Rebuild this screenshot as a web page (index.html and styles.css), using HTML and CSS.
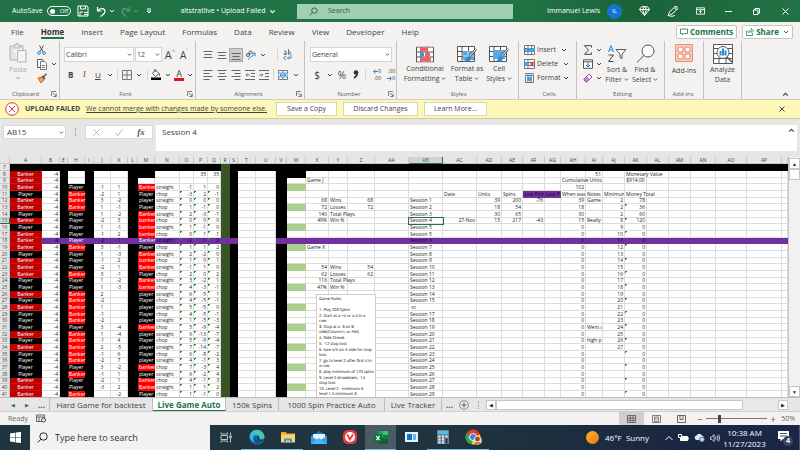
FILE: index.html
```html
<!DOCTYPE html>
<html lang="en">
<head>
<meta charset="utf-8">
<title>altstratlive - Excel</title>
<link rel="stylesheet" href="styles.css">
</head>
<body>
<svg class="defs" aria-hidden="true">
  <symbol id="chev" viewBox="0 0 6 6"><path d="M1 2l2 2 2-2" fill="none" stroke="currentColor"/></symbol>
  <symbol id="launch" viewBox="0 0 6 6"><path d="M.5 5V.5H5M2 2l3 3M5.3 2.500v3h-3" fill="none" stroke="currentColor" stroke-width=".8"/></symbol>
  <symbol id="table" viewBox="0 0 18 16"><path d="M.5.500h17v15H.5z" fill="#fff"/><path d="M.5.500h17v15H.5zM.5 5.500h17M.5 10.500h17M5 .5v15M11.500.500v15" fill="none" stroke="#555"/></symbol>
</svg>

<header class="titlebar">
  <span class="autosave">AutoSave</span>
  <button class="toggle" aria-label="AutoSave off"><i></i>Off</button>
  <button class="qa save" aria-label="Save"><svg viewBox="0 0 12 12" width="12" height="12"><path d="M1 1h9l1 1v9H1zM3.500 1v3h5V1M3 11V7h3M7 7.500h4M7 9.500h4" fill="none" stroke="currentColor"/></svg></button>
  <button class="qa undo" aria-label="Undo"><svg viewBox="0 0 11 11" width="11" height="11"><path d="M1.500 1v4h4M1.500 5C4 1.500 9 2 9 5.500c0 2-2 3-4.500 5" fill="none" stroke="currentColor" stroke-width="1.200"/></svg><svg width="6" height="6"><use href="#chev"/></svg></button>
  <button class="qa redo" aria-label="Redo"><svg viewBox="0 0 11 11" width="11" height="11"><path d="M9.500 1v4h-4M9.500 5C7 1.500 2 2 2 5.500c0 2 2 3 4.500 5" fill="none" stroke="currentColor" stroke-width="1.200"/></svg><svg width="6" height="6"><use href="#chev"/></svg></button>
  <button class="qa more" aria-label="Customize"><svg viewBox="0 0 6 6" width="6" height="6"><path d="M1 1h4M1 3l2 2 2-2z" fill="none" stroke="currentColor"/></svg></button>
  <button class="doc">altstratlive • Upload Failed <svg width="7" height="7"><use href="#chev"/></svg></button>
  <label class="search"><svg viewBox="0 0 10 10" width="9" height="9"><circle cx="6" cy="4" r="3" fill="none" stroke="currentColor"/><path d="M4 6L.5 9.500" stroke="currentColor"/></svg><input type="text" placeholder="Search" aria-label="Search"></label>
  <span class="user">Immanuel Lewis</span><span class="avatar">IL</span>
  <nav class="winbtns">
    <button aria-label="Premium"><svg viewBox="0 0 11 10" width="11" height="10"><path d="M2.500.700h6l2 2.800-5 6-5-6zM.5 3.500h10M3.500 3.500l2 6 2-6-2-2.800z" fill="none" stroke="currentColor"/></svg></button>
    <button aria-label="Pen"><svg viewBox="0 0 11 11" width="11" height="11"><path d="M1 10l1.500-4L7 1.500 9.500 4 5 8zM7 1l3-.5L10 4M3 10.500c2-1 4 .5 5-1.500" fill="none" stroke="currentColor"/></svg></button>
    <button aria-label="Ribbon display"><svg viewBox="0 0 10 8" width="9" height="8"><path d="M.5.500h9v7h-9zM.5 2.500h9M5 6.500v-3M3.500 5L5 3.500 6.500 5" fill="none" stroke="currentColor"/></svg></button>
    <button aria-label="Minimize"><svg viewBox="0 0 7 7" width="7" height="7"><path d="M0 3.500h7" stroke="currentColor"/></svg></button>
    <button aria-label="Restore"><svg viewBox="0 0 7 7" width="7" height="7"><path d="M.5 2h4.500v4.500H.5zM2 2V.5h4.500V5H5" fill="none" stroke="currentColor"/></svg></button>
    <button aria-label="Close"><svg viewBox="0 0 7 7" width="7" height="7"><path d="M.5.500l6 6M6.500.500l-6 6" stroke="currentColor"/></svg></button>
  </nav>
</header>

<nav class="tabs">
  <a href="#">File</a><a href="#" class="on">Home</a><a href="#">Insert</a><a href="#">Page Layout</a><a href="#">Formulas</a><a href="#">Data</a><a href="#">Review</a><a href="#">View</a><a href="#">Developer</a><a href="#">Help</a>
  <span class="grow"></span>
  <button class="pill"><svg viewBox="0 0 8 8" width="8" height="8"><path d="M.5 1h7v4.500H4L2.500 7V5.500h-2z" fill="none" stroke="currentColor" stroke-width=".8"/></svg>Comments</button>
  <button class="pill"><svg viewBox="0 0 8 8" width="8" height="8"><path d="M2 3H.5v4.500h6V5M2.500 5c0-2 1-3 3-3V.5L7.500 3 5.500 4.700V3.500c-1.500 0-2.300.5-3 1.500z" fill="none" stroke="currentColor" stroke-width=".7"/></svg>Share <svg width="6" height="6"><use href="#chev"/></svg></button>
</nav>

<section class="ribbon">
  <div class="group clipboard">
    <div class="body">
      <button class="big paste"><svg viewBox="0 0 18 20" width="18" height="20"><path d="M4 3H1v14h7M10 3h4v4M5 2h1.500a1.500 1.500 0 0 1 3 0H11v3H5z" fill="#e4e4e4" stroke="#b0b0b0"/><path d="M8.500 7.500h8.500v11.500H8.500z" fill="#f4f4f4" stroke="#b0b0b0"/></svg><span>Paste</span><svg width="6" height="6"><use href="#chev"/></svg></button>
      <div class="stack">
        <button aria-label="Cut"><svg viewBox="0 0 9 10" width="9" height="10"><path d="M2.500.500l3.800 6.500M6.500.500L2.700 7" stroke="#555"/><circle cx="2" cy="8" r="1.400" fill="none" stroke="#2b88d8"/><circle cx="7" cy="8" r="1.400" fill="none" stroke="#2b88d8"/></svg></button>
        <button aria-label="Copy"><svg viewBox="0 0 10 11" width="10" height="11"><path d="M3.500 8.500h-3v-8h5l1 2" fill="#fff" stroke="#555"/><path d="M3.500 2.500h4l2 2v6h-6zM5 6.500h3M5 8.500h3" fill="#fff" stroke="#555" stroke-width=".8"/></svg><svg width="6" height="6"><use href="#chev"/></svg></button>
        <button aria-label="Format painter"><svg viewBox="0 0 10 10" width="10" height="10"><path d="M1 5l5-1 1 3-3 3z" fill="#f5a04c" stroke="#c66a16"/><path d="M5 3l3 3M6.500 4L9.500.700" stroke="#555" stroke-width="1.500"/></svg></button>
      </div>
    </div>
    <div class="label"><span>Clipboard</span><svg width="6" height="6"><use href="#launch"/></svg></div>
  </div>

  <div class="group font">
    <div class="body rows">
      <div class="row">
        <select class="fname" aria-label="Font"><option>Calibri</option></select>
        <select class="fsize" aria-label="Font size"><option>12</option></select>
        <button class="slot big-a">A<sup>^</sup></button><button class="slot small-a">A<sup>˅</sup></button>
      </div>
      <div class="row">
        <button class="slot b">B</button><button class="slot i">I</button><button class="slot u">U</button><button class="slot c"><svg width="6" height="6"><use href="#chev"/></svg></button>
        <i class="sep"></i>
        <button class="slot" aria-label="Borders"><svg viewBox="0 0 10 10" width="10" height="10"><path d="M.5.500h9v9h-9zM5 0v10M0 5h10" fill="none" stroke="#777"/></svg></button><button class="slot c"><svg width="6" height="6"><use href="#chev"/></svg></button>
        <i class="sep"></i>
        <button class="slot" aria-label="Fill color"><svg viewBox="0 0 10 11" width="10" height="11"><path d="M4.500 1L8 4.500 4.500 7.500 1.500 4.500zM4 0v3" fill="#fff" stroke="#555"/><path d="M8.500 4.500v2.500" stroke="#2b88d8"/><path d="M0 8.500h10V11H0z" fill="#000"/></svg></button><button class="slot c"><svg width="6" height="6"><use href="#chev"/></svg></button>
        <button class="slot acol" aria-label="Font color">A</button><button class="slot c"><svg width="6" height="6"><use href="#chev"/></svg></button>
      </div>
    </div>
    <div class="label"><span>Font</span><svg width="6" height="6"><use href="#launch"/></svg></div>
  </div>

  <div class="group align">
    <div class="body rows">
      <div class="row">
        <button class="slot" aria-label="Top"><svg class="ln" viewBox="0 0 10 10"><path d="M.5 1.500h9M1.500 4.500h7M.5 7.500h9"/></svg></button>
        <button class="slot" aria-label="Middle"><svg class="ln" viewBox="0 0 10 10"><path d="M.5 2.500h9M1.500 5.500h7M.5 8.500h9"/></svg></button>
        <button class="slot sel" aria-label="Bottom"><svg class="ln" viewBox="0 0 10 10"><path d="M.5 3.500h9M1.500 6.500h7M.5 9.500h9"/></svg></button>
        <button class="slot" aria-label="Orientation"><svg viewBox="0 0 11 10" width="11" height="10"><circle cx="3" cy="5" r="1.500" fill="none" stroke="#555"/><circle cx="5.500" cy="2.500" r="1.500" fill="none" stroke="#555"/><path d="M3 9.500l7-6M7 3h3v3" fill="none" stroke="#2b88d8"/></svg></button>
        <button class="slot c"><svg width="6" height="6"><use href="#chev"/></svg></button>
        <i class="sep wide"></i>
        <button class="slot wrap" aria-label="Wrap text"><svg viewBox="0 0 9 11" width="9" height="11"><path d="M1 2.500c2-1 2.500 0 2.500 3C1 6 .5 5 1 4.500s1.500-.5 2.500-.5M5.500 0v5.500c3 .5 3-3.500 0-2.500" fill="none" stroke="#555" stroke-width=".8"/><path d="M3 7.500c-3 0-3 3 0 3M8 6v3H4.500M6 7.500L4.500 9 6 10.500" fill="none" stroke="#2b88d8"/></svg></button>
      </div>
      <div class="row">
        <button class="slot" aria-label="Left"><svg class="ln" viewBox="0 0 10 10"><path d="M.5.500h9M.5 3.500h6M.5 6.500h9M.5 9.500h6"/></svg></button>
        <button class="slot" aria-label="Center"><svg class="ln" viewBox="0 0 10 10"><path d="M.5.500h9M2 3.500h6M.5 6.500h9M2 9.500h6"/></svg></button>
        <button class="slot" aria-label="Right"><svg class="ln" viewBox="0 0 10 10"><path d="M.5.500h9M3.500 3.500h6M.5 6.500h9M3.500 9.500h6"/></svg></button>
        <button class="slot" aria-label="Decrease indent"><svg class="ln" viewBox="0 0 10 10"><path d="M0 .5h10M6 3.500h4M6 6.500h4M0 9.500h10"/><path class="bl" d="M5 5H1M2.500 3.500L1 5l1.500 1.500"/></svg></button>
        <button class="slot" aria-label="Increase indent"><svg class="ln" viewBox="0 0 10 10"><path d="M0 .5h10M6 3.500h4M6 6.500h4M0 9.500h10"/><path class="bl" d="M0 5h4M2.500 3.500L4 5 2.500 6.500"/></svg></button>
        <i class="sep"></i>
        <button class="slot" aria-label="Merge"><svg viewBox="0 0 10 10" width="10" height="10"><path d="M.5.500h9v9h-9zM5 0v10" fill="#fff" stroke="#777"/><path d="M0 3h10v4H0z" fill="#cfe6f8" stroke="#2b88d8" stroke-width=".7"/><path d="M2 5h6M3.500 3.500L2 5l1.500 1.500M6.500 3.500L8 5 6.500 6.500" fill="none" stroke="#1a78c8" stroke-width=".8"/></svg></button>
        <button class="slot c"><svg width="6" height="6"><use href="#chev"/></svg></button>
      </div>
    </div>
    <div class="label"><span>Alignment</span><svg width="6" height="6"><use href="#launch"/></svg></div>
  </div>

  <div class="group number">
    <div class="body rows">
      <div class="row"><select class="fmt" aria-label="Number format"><option>General</option></select></div>
      <div class="row">
        <button class="slot sym">$</button><button class="slot c"><svg width="6" height="6"><use href="#chev"/></svg></button>
        <button class="slot sym">%</button><button class="slot" aria-label="Comma"><svg viewBox="0 0 6 9" width="6" height="9"><circle cx="3" cy="2.500" r="2.300" fill="#333"/><path d="M4.500 2.500C4.500 5 3.500 6.500 1 8" fill="none" stroke="#333" stroke-width="1.500"/></svg></button>
        <i class="sep"></i>
        <button class="slot dec" aria-label="Increase decimal"><span><svg viewBox="0 0 5 5" width="5" height="5"><path d="M5 2.500H.7M2.500.500l-2 2 2 2" fill="none" stroke="#2b88d8"/></svg>0</span><span>.00</span></button>
        <button class="slot dec" aria-label="Decrease decimal"><span>.00</span><span><svg viewBox="0 0 5 5" width="5" height="5"><path d="M0 2.500h4.300M2.500.500l2 2-2 2" fill="none" stroke="#2b88d8"/></svg>0</span></button>
      </div>
    </div>
    <div class="label"><span>Number</span><svg width="6" height="6"><use href="#launch"/></svg></div>
  </div>

  <div class="group styles">
    <div class="body">
      <button class="big w44"><svg width="18" height="16" viewBox="0 0 18 16"><use href="#table" width="18" height="16"/><path d="M4 1h8v4H4zM4 11h11v4H4z" fill="#f0606a"/><path d="M4 6h4v4H4z" fill="#4a90d9"/><path d="M9 6h5v4H9z" fill="#f0606a"/></svg><span>Conditional<br>Formatting <svg width="5" height="5"><use href="#chev"/></svg></span></button>
      <button class="big w36"><svg width="20" height="17" viewBox="0 0 20 17"><use href="#table" width="18" height="16"/><path d="M6 5h11v9H6z" fill="#5aa9e6"/><path d="M6 10h11M11 5v9" stroke="#fff" stroke-width=".6"/><path d="M19 3l-7 8" stroke="#555" stroke-width="2.500"/><path d="M19 3l-7 8" stroke="#fff"/><path d="M12 10c-3 0-2 4-5 5 3 2 7 0 7-3z" fill="#2b88d8"/></svg><span>Format as<br>Table <svg width="5" height="5"><use href="#chev"/></svg></span></button>
      <button class="big w28"><svg width="20" height="17" viewBox="0 0 20 17"><use href="#table" width="18" height="16"/><path d="M4 4h12v9H4z" fill="#5aa9e6"/><path d="M19 3l-7 8" stroke="#555" stroke-width="2.500"/><path d="M19 3l-7 8" stroke="#fff"/><path d="M12 10c-3 0-2 4-5 5 3 2 7 0 7-3z" fill="#2b88d8"/></svg><span>Cell<br>Styles <svg width="5" height="5"><use href="#chev"/></svg></span></button>
    </div>
    <div class="label"><span>Styles</span></div>
  </div>

  <div class="group cells">
    <div class="body">
      <div class="stack">
        <button><svg viewBox="0 0 11 10" width="11" height="10"><path d="M.5.500h10v9H.5zM.5 3.500h10M.5 6.500h10M4 .5v9M7.500.500v9" fill="#fff" stroke="#555" stroke-width=".8"/><path d="M3 3h8v4H3z" fill="#4a9fe0"/><path d="M5 5H0M2 3L0 5l2 2" fill="none" stroke="#1a78c8"/></svg>Insert <svg class="far" width="6" height="6"><use href="#chev"/></svg></button>
        <button><svg viewBox="0 0 11 10" width="11" height="10"><path d="M.5.500h10v9H.5zM.5 3.500h10M.5 6.500h10M4 .5v9" fill="#fff" stroke="#555" stroke-width=".8"/><path d="M0 3h5v4H0z" fill="#4a9fe0"/><path d="M6 3l4 4M10 3L6 7" stroke="#e03c3c" stroke-width="1.300"/></svg>Delete <svg class="far" width="6" height="6"><use href="#chev"/></svg></button>
        <button><svg viewBox="0 0 11 10" width="11" height="10"><path d="M1.500 2.500h8v7h-8zM4 2v8M7 2v8" fill="#fff" stroke="#555" stroke-width=".8"/><path d="M3 4h5v4H3z" fill="#4a9fe0"/><path d="M1 .7h9" stroke="#1a78c8"/></svg>Format <svg width="6" height="6"><use href="#chev"/></svg></button>
      </div>
    </div>
    <div class="label"><span>Cells</span></div>
  </div>

  <div class="group editing">
    <div class="body">
      <div class="stack">
        <button aria-label="Sum"><svg viewBox="0 0 10 10" width="10" height="10"><path d="M8.500 2.500V.7H1.500L5.500 5l-4 4.300h7V7.500" fill="none" stroke="#444"/></svg><svg width="6" height="6"><use href="#chev"/></svg></button>
        <button aria-label="Fill"><svg viewBox="0 0 10 10" width="10" height="10"><path d="M.5.800h9v8.500h-9zM.5 2.800h9" fill="#fff" stroke="#555"/><path d="M5 3.500V8M3 6l2 2 2-2" fill="none" stroke="#1a78c8"/></svg><svg width="6" height="6"><use href="#chev"/></svg></button>
        <button aria-label="Clear"><svg viewBox="0 0 10 10" width="10" height="10"><path d="M1 6l5-5 3 3-5 5H3L1 7z" fill="#fff" stroke="#a349b5"/><path d="M3.500 3.500L6.500 6.500 4 9 1 6z" fill="#c98bd5" stroke="#a349b5" stroke-width=".6"/></svg><svg width="6" height="6"><use href="#chev"/></svg></button>
      </div>
      <button class="big w28"><svg viewBox="0 0 20 19" width="20" height="19"><path d="M1.500 8L4 1.500 6.500 8M2.300 6h3.500" fill="none" stroke="#2b88d8"/><path d="M1.500 11h5l-5 6.500h5" fill="none" stroke="#444"/><path d="M9 5.500h10l-4 4.500v4.500l-2-1V10z" fill="#fff" stroke="#555"/></svg><span>Sort &amp;<br>Filter <svg width="5" height="5"><use href="#chev"/></svg></span></button>
      <button class="big w28"><svg viewBox="0 0 19 19" width="19" height="19"><circle cx="12" cy="7" r="6" fill="#fff" stroke="#555"/><path d="M8 11.500L.7 18.500" stroke="#555"/></svg><span>Find &amp;<br>Select <svg width="5" height="5"><use href="#chev"/></svg></span></button>
    </div>
    <div class="label"><span>Editing</span></div>
  </div>

  <div class="group addins">
    <div class="body"><button class="big"><svg viewBox="0 0 18 18" width="18" height="18"><path d="M.7.700h16.600v16.600H.7z" fill="#fbe3dc" stroke="#e8795a"/><path d="M3 3h5v5H3zM10 3h5v5h-5zM3 10h5v5H3zM10 10h5v5h-5z" fill="#fff" stroke="#e8795a"/></svg><span>Add-ins</span></button></div>
    <div class="label"><span>Add-ins</span></div>
  </div>
  <div class="group analyze">
    <div class="body"><button class="big"><svg viewBox="0 0 20 20" width="20" height="20"><path d="M.5.500h19v19H.5zM.5 4.500h19M.5 9.500h19M.5 14.500h19M6 14v6M13 14v6" fill="#fff" stroke="#555"/><circle cx="10" cy="8.500" r="6" fill="#fff" stroke="#555"/><path d="M14 13l5 5" stroke="#555" stroke-width="1.500"/><path d="M6.500 7h2v4.500h-2zM9 4.500h2v7H9zM11.500 6.500h2v5h-2z" fill="#2b88d8"/></svg><span>Analyze<br>Data</span></button></div>
    <div class="label"></div>
  </div>
  <button class="collapse" aria-label="Collapse ribbon"><svg viewBox="0 0 6 6" width="7" height="7"><path d="M1 4l2-2 2 2" fill="none" stroke="currentColor"/></svg></button>
</section>

<section class="message">
  <svg viewBox="0 0 14 14" width="14" height="14"><circle cx="7" cy="7" r="6.300" fill="#fff" stroke="#d9363e"/><path d="M4 4l6 6M10 4l-6 6" stroke="#d9363e"/></svg>
  <strong>UPLOAD FAILED</strong><a href="#">We cannot merge with changes made by someone else.</a>
  <button class="w60">Save a Copy</button><button class="w74">Discard Changes</button><button class="w62">Learn More...</button>
  <span class="grow"></span>
  <button class="x" aria-label="Dismiss"><svg viewBox="0 0 6 6" width="6" height="6"><path d="M.5.500l5 5M5.500.500l-5 5" stroke="#444"/></svg></button>
</section>

<section class="formula">
  <select class="name" aria-label="Name box"><option>AB15</option></select>
  <i class="grip"></i>
  <div class="fx"><svg viewBox="0 0 8 8" width="7" height="7"><path d="M.5.500l7 7M7.500.500l-7 7" stroke="#aaa"/></svg><svg viewBox="0 0 9 8" width="8" height="7"><path d="M.5 4.500l2.500 3L8.500.500" fill="none" stroke="#aaa"/></svg><em>fx</em></div>
  <div class="entry"><input type="text" value="Session 4" aria-label="Formula bar"><svg viewBox="0 0 6 6" width="7" height="7"><path d="M1 4l2-2 2 2" fill="none" stroke="#444"/></svg></div>
</section>

<main class="sheet">
  <div class="grid">
    <table id="cells"></table>
    <aside class="note">
      <p>Game Rules</p>
      <ol>
        <li>1. Play 200 Spins</li><li>2. Start at a +4 or a 4 in a<br>row</li><li>3. Stop at a -3 on B<br>side(Column L or AM)</li><li>4. Ride Streak</li><li>5. -12 stop loss</li><li>6. lose 4/5 on A side for stop<br>loss</li><li>7. go to level 2 after first 4 in<br>a row</li><li>8. play minimum of 170 spins</li><li>9. Level 2 drawdown, -14<br>stop loss</li><li>10. Level 2 - minimum 6<br>level 1.5 minimum 3</li>
      </ol>
    </aside>
  </div>
  <div class="vscroll"><button aria-label="Scroll up">▲</button><i></i><span class="grow"></span><button aria-label="Scroll down">▼</button></div>
</main>

<nav class="sheets">
  <button class="arr">◀</button><button class="arr">▶</button><button class="arr dots">...</button>
  <a href="#" class="t1">Hard Game for backtest</a><a href="#" class="on">Live Game Auto</a><a href="#" class="t3">150k Spins</a><a href="#" class="t4">1000 Spin Practice Auto</a><a href="#" class="t5">Live Tracker</a>
  <button class="arr dots">...</button>
  <button class="plus" aria-label="New sheet"><svg viewBox="0 0 10 10" width="10" height="10"><path d="M5 2.500v5M2.500 5h5" stroke="#666"/><circle cx="5" cy="5" r="4.400" fill="none" stroke="#777" stroke-width=".8"/></svg></button>
  <i class="grip"></i>
  <div class="hscroll"><button aria-label="Scroll left">◀</button><i></i><span></span><button aria-label="Scroll right">▶</button></div>
</nav>

<footer class="status">
  <span class="ready">Ready</span>
  <svg viewBox="0 0 10 9" width="10" height="9"><path d="M.5 1h8v6.500h-8zM.5 3h8M3 3v4.500" fill="none" stroke="#666"/><circle cx="7.500" cy="6" r="2" fill="#f3f2f1" stroke="#444"/></svg>
  <span class="grow"></span>
  <button class="view on" aria-label="Normal"><svg viewBox="0 0 9 8" width="9" height="8"><path d="M.5.500h8v7h-8zM.5 3h8M.5 5.300h8M3.300.500v7M6 .5v7" fill="none" stroke="#555" stroke-width=".8"/></svg></button>
  <button class="view" aria-label="Page layout"><svg viewBox="0 0 9 8" width="9" height="8"><path d="M.5.500h8v7h-8zM2.500 2h4v4.500h-4zM3 4h3" fill="none" stroke="#666" stroke-width=".8"/></svg></button>
  <button class="view" aria-label="Page break"><svg viewBox="0 0 9 8" width="9" height="8"><path d="M.5.500h8v7h-8zM3 .5v4h3v-4" fill="none" stroke="#666"/></svg></button>
  <button class="zb">−</button><input type="range" min="10" max="180" value="45" aria-label="Zoom"><button class="zb">+</button><span class="pct">50%</span>
</footer>

<footer class="taskbar">
  <button class="start" aria-label="Start"><svg viewBox="0 0 11 11" width="11" height="11"><path d="M0 1.500l5-.8V5.200H0zM5.600.600L11 0v5.200H5.600zM0 5.800h5v4.500l-5-.8zM5.600 5.800H11V11l-5.400-.6z" fill="#fff"/></svg></button>
  <label class="find"><svg viewBox="0 0 11 11" width="11" height="11"><circle cx="6.500" cy="4.500" r="3.700" fill="none" stroke="#222"/><path d="M4 7.200L.7 10.500" stroke="#222"/></svg><input type="text" placeholder="Type here to search" aria-label="Search Windows"></label>
  <div class="apps">
    <button aria-label="Task view"><svg viewBox="0 0 12 11" width="12" height="11"><path d="M1 .5v1.500h6.500V.5M1 10.500V9h6.500v1.500M1 3.500h6.500v4H1zM10.500.500v3M10.500 6v4.500M9.500 4h2v1.500h-2z" fill="none" stroke="#c8d0d4" stroke-width=".9"/></svg></button>
    <button class="run" aria-label="Edge"><svg viewBox="0 0 16 16" width="16" height="16"><circle cx="8" cy="8" r="7.500" fill="#1b78d0"/><path d="M.6 7C2-.5 13-1.500 15.500 7c.3 3-3 4.500-5.500 3 1-1 .5-4-2.500-4C4 6 1 8 .6 7z" fill="#43c8a8"/><path d="M.6 7C2 3.500 6 3 8 4.500 4 5 3 10 6 13c-3-.5-5.500-3-5.400-6z" fill="#35b5e8"/><path d="M7.500 7c-2 2 0 5.500 6 4.500-2 3-5 3.500-7 2.500-3-2-2-6 1-7z" fill="#0c4f9e"/><path d="M8 7.500c2-1 3 1 2 2.500 1.500 1 4 .7 5-.5l-1.500 2.200C10 12.500 7 10 8 7.500z" fill="#20343f"/></svg></button>
    <button class="run" aria-label="Explorer"><svg viewBox="0 0 14 12" width="14" height="12"><path d="M0 1h5l1 1.500h8V11H0z" fill="#e8a82c"/><path d="M0 3.500h14v8H0z" fill="#fcd768"/><path d="M3 12V7.500h8V12H9V9.500H5V12z" fill="#3b94d9"/></svg></button>
    <button aria-label="Mail"><svg viewBox="0 0 16 13" width="16" height="13"><path d="M0 5l8-5 8 5v8H0z" fill="#1976c5"/><path d="M2 3h12v5l-6 3-6-3z" fill="#e8f4fc"/><path d="M0 5l8 5 8-5v8H0z" fill="#2fa3ea"/><path d="M0 13l8-6 8 6z" fill="#45b8f5"/></svg></button>
    <button aria-label="Vivaldi"><svg viewBox="0 0 14 14" width="14" height="14"><rect width="14" height="14" rx="5" fill="#e8393c"/><circle cx="7" cy="7" r="5" fill="#fff"/><path d="M4.500 5L7 9.500 9.500 5" fill="none" stroke="#e8393c" stroke-width="1.800" stroke-linecap="round"/></svg></button>
    <button class="run cur" aria-label="Excel"><svg viewBox="0 0 14 13" width="14" height="13"><path d="M4 0h10v13H4z" fill="#21a366"/><path d="M9 0h5v4H9z" fill="#33c481"/><path d="M4 7h10v6H4z" fill="#185c37"/><path d="M9 4h5v4H9z" fill="#107c41"/><path d="M0 3h8v8H0z" fill="#0f7038"/><path d="M2.300 4.800l3.400 4.400M5.700 4.800L2.300 9.200" stroke="#fff" stroke-width="1.100"/></svg></button>
    <button aria-label="App"><svg viewBox="0 0 13 10" width="13" height="10"><path d="M0 0h13v10H0z" fill="#e8f1f7"/><path d="M2 2h5v6H2z" fill="#0b74d1"/><path d="M8 2h3v6H8z" fill="#71b3e6"/></svg></button>
    <button class="run" aria-label="Calculator"><svg viewBox="0 0 12 14" width="12" height="14"><path d="M0 0h12v14H0z" fill="#71828d"/><path d="M1 1h10v3H1z" fill="#4cc2f1"/><path d="M1.500 5.500h2v2h-2zM5 5.500h2v2H5zM8.500 5.500h2v2h-2zM1.500 8.500h2v2h-2zM5 8.500h2v2H5zM1.500 11.500h2v2h-2zM5 11.500h2v2H5z" fill="#e5edf1"/><path d="M8.500 8.500h2v5h-2z" fill="#123c66"/></svg></button>
    <button class="run" aria-label="Chrome"><svg viewBox="0 0 17 16" width="17" height="16"><circle cx="8" cy="8" r="7.500" fill="#e33b2e"/><path d="M8 8L1.300 4.500A7.500 7.500 0 0 0 7 15.500l3-5z" fill="#2da94f"/><path d="M8 8l7-2.500A7.500 7.500 0 0 1 7 15.500z" fill="#fcc934"/><circle cx="8" cy="8" r="3.800" fill="#fff"/><circle cx="8" cy="8" r="2.900" fill="#3a7ff0"/><circle cx="12.500" cy="11.500" r="4.300" fill="#e9dccb"/><circle cx="12.500" cy="10" r="2.300" fill="#8c4a20"/><path d="M9.500 15c0-3 6-3 6 0z" fill="#d9772b"/></svg></button>
  </div>
  <span class="grow"></span>
  <div class="weather"><i></i>46°F&nbsp; Sunny</div>
  <div class="tray">
    <svg viewBox="0 0 8 6" width="8" height="6"><path d="M.5 5L4 1.500 7.500 5" fill="none" stroke="#fff"/></svg>
    <svg viewBox="0 0 11 8" width="11" height="8"><path d="M2.500 2.500h7v4h-7z" fill="#fff" stroke="#fff"/><path d="M.5.500h3v3h-3zM10.700 3.500v2" fill="#1d2d40" stroke="#fff"/></svg>
    <svg viewBox="0 0 11 9" width="11" height="9"><path d="M2.500 7a2.300 2.300 0 0 1 0-4.500 3 3 0 0 1 5.500 0A2.300 2.300 0 0 1 8 7z" fill="#dfe7ef"/><circle cx="8" cy="6.500" r="2.300" fill="#cfe0f0" stroke="#52708e"/></svg>
    <svg viewBox="0 0 10 8" width="10" height="8"><path d="M.5 3v2.500H2L4 7.500v-7L2 3zM5.500 2.500q1 1.500 0 3M7 1.500q2 2.500 0 5M8.500.500q2.500 3.500 0 7" fill="none" stroke="#e6e9ee" stroke-width=".8"/></svg>
  </div>
  <div class="clock"><span>10:38 AM</span><span>11/27/2023</span></div>
  <button class="notif" aria-label="Notifications"><svg viewBox="0 0 12 12" width="12" height="12"><path d="M0 0h11v8H5L2.500 10.500V8H0z" fill="#fff"/><path d="M2 2.500h7M2 5h7" stroke="#1c2b40" stroke-width=".8"/></svg><b>4</b></button>
</footer>
<script src="sheet.js"></script>
</body>
</html>
```

FILE: styles.css
```css
* { box-sizing: border-box; }
body {
  margin: 0;
  height: 100vh;
  display: flex;
  flex-direction: column;
  overflow: hidden;
  background: #e6e6e6;
  color: #444;
  font: 7px/10px "Open Sans", "Noto Sans", sans-serif;
}
button, input, select { font: inherit; color: inherit; border: 0; margin: 0; padding: 0; background: none; appearance: none; border-radius: 0; outline: 0; }
button { display: flex; align-items: center; justify-content: center; white-space: nowrap; }
a { color: inherit; text-decoration: none; white-space: nowrap; }
svg { flex: none; }
.defs { position: absolute; width: 0; height: 0; }
.grow { flex: 1; }

/* title bar */
.titlebar { display: flex; align-items: center; height: 22px; flex: none; background: linear-gradient(90deg, #217346 65%, #1c6239 80%, #217346); color: #fff; padding-left: 12px; }
.autosave { width: 35px; }
.toggle { width: 24px; height: 10px; border: 1px solid #fff; border-radius: 5px; gap: 5px; font-size: 6px; }
.toggle i { width: 5px; height: 5px; border-radius: 3px; background: #fff; }
.save { width: 24px; }
.undo { width: 20px; gap: 2px; }
.redo { width: 28px; gap: 2px; color: #5c9a78; }
.more { width: 12px; }
.doc { width: 122px; gap: 3px; margin-left: 12px; }
.search { flex: 1; height: 15px; margin-left: 8px; margin-right: 34px; display: flex; align-items: center; gap: 10px; padding-left: 12px; background: #a0cfb4; color: #1f5c3a; }
.search input { flex: 1; min-width: 0; }
.search input::placeholder { color: #1f5c3a; opacity: 1; }
.user { width: 60px; white-space: nowrap; }
.avatar { width: 15px; height: 15px; border-radius: 8px; background: #1275d0; text-align: center; line-height: 15px; font-size: 6px; margin-right: 8px; }
.winbtns { display: flex; }
.winbtns button { width: 28px; }
.winbtns button:last-child { width: 30px; }

/* ribbon tabs */
.tabs { display: flex; align-items: center; height: 19px; flex: none; background: #f3f2f1; font-size: 8px; padding: 0 7px 0 11px; gap: 17px; }
.tabs .on { font-weight: 700; color: #333; box-shadow: 0 2px #217346; }
.tabs .grow { margin-right: -34px; }
.pill { height: 14px; gap: 2px; padding: 0 3px; border: 1px solid #c8c6c4; border-radius: 2px; background: #fff; color: #217346; font-weight: 700; }
.pill + .pill { margin-left: -12px; }
.pill svg:last-child:not(:first-child) { margin-left: 2px; }

/* ribbon */
.ribbon { display: flex; height: 59px; flex: none; background: #f3f2f1; border-bottom: 1px solid #d0cec0; }
.group { display: flex; flex-direction: column; border-right: 1px solid #c4c2c0; flex: none; padding-top: 2px; }
.body { flex: 1; min-height: 0; display: flex; }
.body.rows { flex-direction: column; gap: 5px; padding-top: 4px; }
.row { display: flex; align-items: center; height: 15px; }
.label { display: flex; flex: none; height: 10px; align-items: center; padding-right: 2px; color: #605e5c; font-size: 6px; }
.label span { flex: 1; text-align: center; }
.slot { width: 14px; height: 14px; }
.slot.c { width: 11px; }
.sep { width: 1px; height: 12px; background: #d8d6d4; margin: 0 2px; }
.sep.wide { margin-left: 9px; }
.slot.sel { background: #cfcdcb; border: 1px solid #a8a6a4; }
.ln { width: 10px; height: 10px; fill: none; stroke: #666; stroke-width: 1; }
.ln .bl { stroke: #2b88d8; }
select { appearance: none; background: #fff url("data:image/svg+xml,%3Csvg xmlns='http://www.w3.org/2000/svg' viewBox='0 0 6 6'%3E%3Cpath d='M1 2l2 2 2-2' fill='none' stroke='%23444'/%3E%3C/svg%3E") no-repeat right 1px center / 5px 5px; }
.row select { height: 15px; border: 1px solid #d6d4d2; padding-left: 1px; }
.fname { width: 70px; }
.fsize { width: 27px; margin: 0 1px; }
.stack { display: flex; flex-direction: column; justify-content: flex-start; }
.stack button { height: 14px; justify-content: flex-start; gap: 2px; }
.big { flex-direction: column; justify-content: flex-start; }
.big > svg:first-child { margin-bottom: 2px; }
.big span { text-align: center; line-height: 10px; flex: none; }

.clipboard { width: 60px; }
.clipboard .stack { padding-left: 5px; }
.paste { width: 28px; margin-left: 4px; color: #aaa; }
.clipboard .stack svg + svg { margin-left: 2px; }
.font { width: 136px; padding-left: 4px; }
.big-a { font-size: 11px; }
.small-a { font-size: 10px; }
.slot sup { color: #2b88d8; font-size: 6px; line-height: 6px; align-self: flex-start; }
.b { font-weight: 700; font-size: 8px; }
.i { font: italic 8px "Liberation Serif", serif; }
.u { font-size: 8px; text-decoration: underline; }
.acol { font-size: 9px; line-height: 9px; height: 12px; width: 11px; border-bottom: 3px solid #e81123; }
.align { width: 109px; padding-left: 5px; }
.number { width: 92px; padding-left: 5px; }
.fmt { width: 82px; }
.sym { font-size: 10px; }
.dec { flex-direction: column; font-size: 5px; line-height: 7px; align-items: flex-end; padding-right: 1px; color: #333; }
.dec span { display: flex; align-items: center; }
.styles { width: 122px; padding-left: 4px; }
.w44 { width: 48px; }
.w36 { width: 36px; }
.w28 { width: 28px; }
.styles .big, .addins .big, .analyze .big { padding-top: 3px; }
.styles .big > svg:first-child { height: 17px; margin-bottom: 1px; }
.cells { width: 58px; padding-left: 5px; }
.cells .far { margin-left: 3px; }
.editing { width: 88px; padding-left: 6px; }
.editing .stack { width: 20px; }
.editing .stack button { gap: 3px; }
.editing .big > svg:first-child { margin-top: 1px; margin-bottom: 2px; }
.addins { width: 39px; }
.addins .big, .analyze .big { width: 100%; padding-top: 1px; }
.addins .big > svg:first-child { margin-bottom: 4px; }
.analyze { width: 38px; }
.analyze .big > svg:first-child { margin-bottom: 1px; }
.collapse { margin-left: auto; align-self: flex-end; width: 20px; height: 10px; margin-right: 5px; }

/* message bar */
.message { display: flex; align-items: center; height: 19px; flex: none; background: #fdf7b8; border-bottom: 1px solid #d2cb9c; padding: 0 6px 0 5px; }
.message strong { margin: 0 6px; color: #444; white-space: nowrap; }
.message a { text-decoration: underline; margin-right: 9px; }
.message button { height: 14px; border: 1px solid #d8d4b4; background: #fff; margin-right: 6px; }
.message .w60 { width: 61px; }
.message .w74 { width: 75px; }
.message .w62 { width: 63px; }
.message .x { border: 0; background: none; margin: 0 8px 0 0; width: 9px; }

/* formula bar */
.formula { display: flex; align-items: flex-start; height: 38px; flex: none; padding: 6px 3px 0 3px; font-size: 8px; }
.name { width: 63px; height: 14px; padding-left: 3px; border: 1px solid #d8d8d8; }
.grip { width: 1px; height: 8px; margin: 3px 9px; border-left: 1px dotted #999; }
.fx { display: flex; align-items: center; justify-content: space-around; width: 68px; height: 14px; background: #fff; border: 1px solid #d8d8d8; }
.fx em { font: italic 700 9px "Liberation Serif", serif; color: #555; }
.entry { flex: 1; display: flex; align-items: flex-start; height: 26px; margin-left: 3px; background: #fff; padding: 2px 2px 0 6px; }
.entry input { flex: 1; height: 10px; }

/* worksheet */
.sheet { flex: 1; min-height: 0; display: flex; }
.grid { position: relative; flex: 1; min-width: 0; overflow: hidden; background: #fff; }
table { table-layout: fixed; width: 100%; border-spacing: 0; font-size: 5px; line-height: 5px; color: #222; }
tr { height: 7px; }
tbody tr:nth-child(3n) { height: 6px; }
th { padding: 0; font-weight: 400; background: #e6e6e6; color: #444; border-right: 1px solid #c6c6c6; border-bottom: 1px solid #c6c6c6; }
th.hit { background: #d2d2d2; color: #217346; border-color: #217346; }
td { padding: 0 1px; white-space: nowrap; border-right: 1px solid #dcdcdc; border-bottom: 1px solid #dcdcdc; }
td.r { text-align: right; }
td.m { text-align: center; }
td.clip { overflow: hidden; }
td.red { background: #c00000; color: #fff; border-color: #c81414; }
td.hot { background: #f00; color: #fff; border-color: #f00; }
td.blk { background: #000; color: #fff; border-color: #000; }
td.grn { background: #375623; border-color: #375623; }
td.lime { background: #a9d08e; border-color: #a9d08e; }
td.pur { background: #7030a0; border-color: #7030a0; color: #180828; }
td.pur.lite { color: #fff; }
td.tri { background: linear-gradient(135deg, #2a8a2a 2px, transparent 2px); }
td.pur.tri { background-color: #7030a0; }
td.cursor { outline: 1px solid #217346; outline-offset: 0; }
.note { position: absolute; left: 316px; top: 137px; width: 60px; height: 110px; padding: 2px 0 0 2px; background: #fff; border: 1px solid #ccc; color: #000; font-size: 4px; line-height: 5px; text-rendering: geometricPrecision; white-space: nowrap; }
.note p { margin: 0 0 6px; }
.note ol { list-style: none; margin: 0; padding: 0; display: flex; flex-direction: column; gap: 1px; }
.vscroll { width: 12px; flex: none; display: flex; flex-direction: column; border-left: 1px solid #c6c6c6; background: #f1f1f1; padding-top: 1px; }
.vscroll button { height: 11px; background: #fff; border: 1px solid #c6c6c6; font-size: 5px; color: #222; }
.vscroll i { height: 11px; background: #fff; border: 1px solid #c6c6c6; }

/* sheet tabs */
.sheets { display: flex; align-items: center; height: 14px; flex: none; border-top: 1px solid #bbb; background: #e6e6e6; font-size: 8px; padding-left: 6px; }
.arr { width: 14px; font-size: 5px; color: #217346; }
.arr.dots { font-size: 8px; font-weight: 700; width: 15px; }
.sheets a { height: 13px; line-height: 13px; border-right: 1px solid #bbb; text-align: center; }
.sheets .t1 { width: 104px; border-left: 1px solid #bbb; }
.sheets .on { width: 73px; background: #fff; color: #217346; font-weight: 700; border-bottom: 1px solid #217346; }
.sheets .t3 { width: 53px; }
.sheets .t4 { width: 106px; }
.sheets .t5 { width: 57px; }
.plus { width: 14px; }
.sheets .grip { margin: 0 7px; }
.hscroll { flex: 1; display: flex; height: 10px; background: #e9e9e9; margin-right: 12px; }
.hscroll button { width: 10px; background: #fff; border: 1px solid #c6c6c6; font-size: 5px; color: #222; }
.hscroll i { flex: 7; background: #fff; border: 1px solid #c6c6c6; }
.hscroll span { flex: 1; }

/* status bar */
.status { display: flex; align-items: center; height: 14px; flex: none; background: #f3f2f1; border-top: 1px solid #d0d0d0; color: #666; padding-right: 5px; }
.ready { width: 28px; margin-left: 8px; }
.view { width: 25px; height: 13px; }
.view.on { background: #d0cecc; }
.zb { width: 12px; font-size: 10px; }
.status input { width: 61px; height: 9px; background: linear-gradient(#777, #777) center / 100% 1px no-repeat; }
.status input::-webkit-slider-thumb { appearance: none; width: 3px; height: 8px; background: #444; }
.pct { width: 16px; text-align: right; }

/* taskbar */
.taskbar { display: flex; align-items: stretch; height: 25px; flex: none; background: linear-gradient(90deg, #20353f 55%, #1a2740 85%, #192649); color: #fff; font-size: 8px; }
.start { width: 30px; }
.find { width: 180px; display: flex; align-items: center; gap: 7px; padding-left: 7px; background: #f2f2f2; color: #333; font-size: 9px; }
.find input { flex: 1; min-width: 0; }
.find input::placeholder { color: #333; opacity: 1; }
.apps { display: flex; }
.apps button { width: 31px; border-bottom: 1px solid transparent; }
.apps .run { border-bottom: 1px solid #76b9ed; background-clip: padding-box; }
.apps .cur { background: #4a5b64; }
.weather { display: flex; align-items: center; white-space: nowrap; }
.weather i { width: 13px; height: 13px; border-radius: 7px; background: linear-gradient(135deg, #fbb829, #f0701a); margin-right: 6px; }
.tray { display: flex; align-items: center; gap: 5px; margin-left: 16px; }
.clock { display: flex; flex-direction: column; justify-content: center; align-items: center; width: 49px; line-height: 11px; }
.notif { position: relative; width: 31px; padding-bottom: 2px; border-right: 1px solid #4c586e; }
.notif b { position: absolute; left: 14px; top: 11px; width: 10px; height: 10px; border-radius: 5px; background: #3c4658; line-height: 10px; font-size: 7px; }
```

FILE: sheet.js
```js
const COLS = [
  ['A', 32], ['B', 18], ['E', 8], ['H', 17], ['I', 9], ['J', 17], ['K', 17], ['L', 10], ['M', 17], ['N', 25],
  ['O', 14], ['P', 14], ['Q', 13], ['R', 9], ['S', 8], ['T', 18], ['U', 20], ['V', 11], ['W', 19], ['X', 23],
  ['Y', 19], ['Z', 27], ['AA', 34], ['AB', 34], ['AC', 34], ['AD', 25], ['AE', 21], ['AF', 22], ['AG', 16],
  ['AH', 25], ['AI', 17], ['AJ', 22], ['AK', 22], ['AL', 22], ['AM', 22], ['AN', 25], ['AO', 31], ['AP', 35], ['', 0]
];
const split = s => s.split(',');
const A = 'BBBPBBPBPBBBPBBBPPBPBPPPBPBPPPPBBB';
const H = '  PBBBPPPPPBPPPBPPBBBBBPBBBBBPBPPB';
const M = '  BPpPBbbbBPBbBPBbpPpPpbpPpPpbpbBP';
const J = split('-1,-2,3,1,1,-2,1,-1,-2,3,1,-1,-2,3,1,1,2,-2,1,-1,-2,3,1,-1,2,-1,-2,3,-1,-2,-3,');
const K = split('1,1,-2,-1,-2,3,-1,2,1,-1,-3,2,1,-1,-2,-3,,,,,,-4,-4,4,-5,6,7,-2,1,1,2,-2');
const O = split('-1,-3,0,1,2,0,1,0,-2,1,2,1,-1,2,3,4,6,4,5,4,1,5,6,5,7,6,4,7,6,4,1,1');
const P = split('1,2,0,-1,-3,0,-1,1,1,1,-2,0,1,0,-2,-3,-5,-5,-5,-5,-5,-9,-13,-9,-14,-8,-1,-3,-2,-1,1,-1');
const Q = split('0,-1,0,0,-1,0,0,1,0,2,0,1,0,2,1,-1,1,-1,0,-1,-3,-4,-7,-4,-7,-2,3,4,4,3,2,0');
const NAMES = { B: 'Banker', P: 'Player', b: 'banker', p: 'player' };

const FIXED = {
  P8: ['35', 'r'], Q8: ['35', 'r'],
  X9: ['Game J', ''], X12: ['68', 'r'], Y12: ['Wins', ''], Z12: ['68', 'r'],
  X13: ['72', 'r'], Y13: ['Losses', ''], Z13: ['72', 'r'], X14: ['140', 'r'], Y14: ['Total Plays', ''],
  X15: ['49%', 'r'], Y15: ['Win %', ''], X19: ['Game K', ''],
  X22: ['54', 'r'], Y22: ['Wins', ''], Z22: ['54', 'r'], X23: ['62', 'r'], Y23: ['Losses', ''], Z23: ['62', 'r'],
  X24: ['116', 'r'], Y24: ['Total Plays', ''], X25: ['47%', 'r'], Y25: ['Win %', ''],
  AC11: ['Date', ''], AC15: ['27-Nov', 'r'],
  AD11: ['Units', ''], AD12: ['39', 'r'], AD13: ['18', 'r'], AD14: ['30', 'r'], AD15: ['15', 'r'],
  AE11: ['Spins', ''], AE12: ['200', 'r'], AE13: ['54', 'r'], AE14: ['65', 'r'], AE15: ['217', 'r'],
  AF11: ['Low Poin', 'pur clip'], AG11: ['Low P', 'pur clip'], AF12: ['-76', 'r'], AF15: ['-43', 'r'],
  AH9: ['Cumulative Units', ''], AH10: ['102', 'r'], AH11: ['When was', 'clip'],
  AH12: ['39', 'r'], AH13: ['18', 'r'], AH14: ['30', 'r'], AH15: ['15', 'r'],
  AI8: ['51', 'r'], AI11: ['Notes', ''], AI12: ['Game', 'clip'], AI15: ['Really', 'clip'],
  AI31: ['Went u', 'clip'], AI33: ['high p', 'clip'],
  AJ11: ['Minimum', 'clip'], AJ12: ['2', 'r'], AJ13: ['2', 'r'], AJ14: ['2', 'r'],
  AK8: ['Monetary Value', ''], AK9: ['$914.00', 'm'], AK11: ['Money Total', ''],
  AK12: ['78', 'r'], AK13: ['36', 'r tri'], AK14: ['60', 'r'], AK15: ['120', 'r tri']
};

function cell(col, row) {
  const i = row - 8, n = row - 10;
  if (row === 7) return ['', col === 'R' ? 'grn' : 'blk'];
  if (FIXED[col + row]) return FIXED[col + row];
  switch (col) {
    case 'A': return [NAMES[A[i]], A[i] === 'B' ? 'm red' : 'm blk'];
    case 'B': return ['-4', 'r'];
    case 'E': case 'I': case 'L': case 'S': case 'V': return ['', 'blk'];
    case 'R': return ['', 'grn'];
    case 'H': return n < 0 ? ['', ''] : [NAMES[H[i]], H[i] === 'B' ? 'm hot' : 'm blk'];
    case 'M': return n < 0 ? ['', row === 8 ? 'blk' : ''] : [NAMES[M[i]], /b/i.test(M[i]) ? 'm hot' : 'm blk'];
    case 'W': return ['', row === 8 ? 'blk' : n % 3 === 0 ? 'lime' : ''];
    case 'AB': return row < 12 ? ['', ''] : [row === 28 ? '&nbsp;vc' : 'Session ' + (row < 17 ? row - 11 : row - 12), row === 15 ? 'cursor' : ''];
    case 'AH': return [row > 15 ? '0' : '', 'r'];
    case 'AJ': return [row > 14 && row < 35 ? row - 7 : '', 'r'];
    case 'AK': return row > 15 ? ['0', row % 2 ? 'r tri' : 'r'] : ['', ''];
  }
  if (n < 0) return ['', ''];
  switch (col) {
    case 'J': return [J[n], 'm'];
    case 'K': return [K[n], 'm'];
    case 'N': return [n % 2 ? 'chop' : 'straight', ''];
    case 'O': return [O[n], n ? 'r tri' : 'r'];
    case 'P': return [P[n], n ? 'r tri' : 'r'];
    case 'Q': return [Q[n], n ? 'r tri' : 'r'];
  }
  return ['', ''];
}

let html = '<colgroup><col style="width:10px">' +
  COLS.map(c => c[1] ? `<col style="width:${c[1]}px">` : '<col>').join('') + '</colgroup><thead><tr><th></th>' +
  COLS.map(c => `<th${c[0] === 'AB' ? ' class="hit"' : ''}>${c[0]}</th>`).join('') + '</tr></thead><tbody>';
for (let row = 7; row <= 41; row++) {
  html += `<tr><th${row === 15 ? ' class="hit"' : ''}>${row}</th>`;
  for (const [col] of COLS) {
    let [text, cls] = cell(col, row);
    // The divider row is purple everywhere except over A, T and U.
    if (row === 18 && !['A', 'T', 'U'].includes(col)) {
      cls = cls.replace(/blk|hot|grn/, '') + ' pur' + (col === 'H' || col === 'M' ? ' lite' : '');
    }
    html += `<td class="${cls}">${text}</td>`;
  }
  html += '</tr>';
}
document.getElementById('cells').innerHTML = html + '</tbody>';
```
